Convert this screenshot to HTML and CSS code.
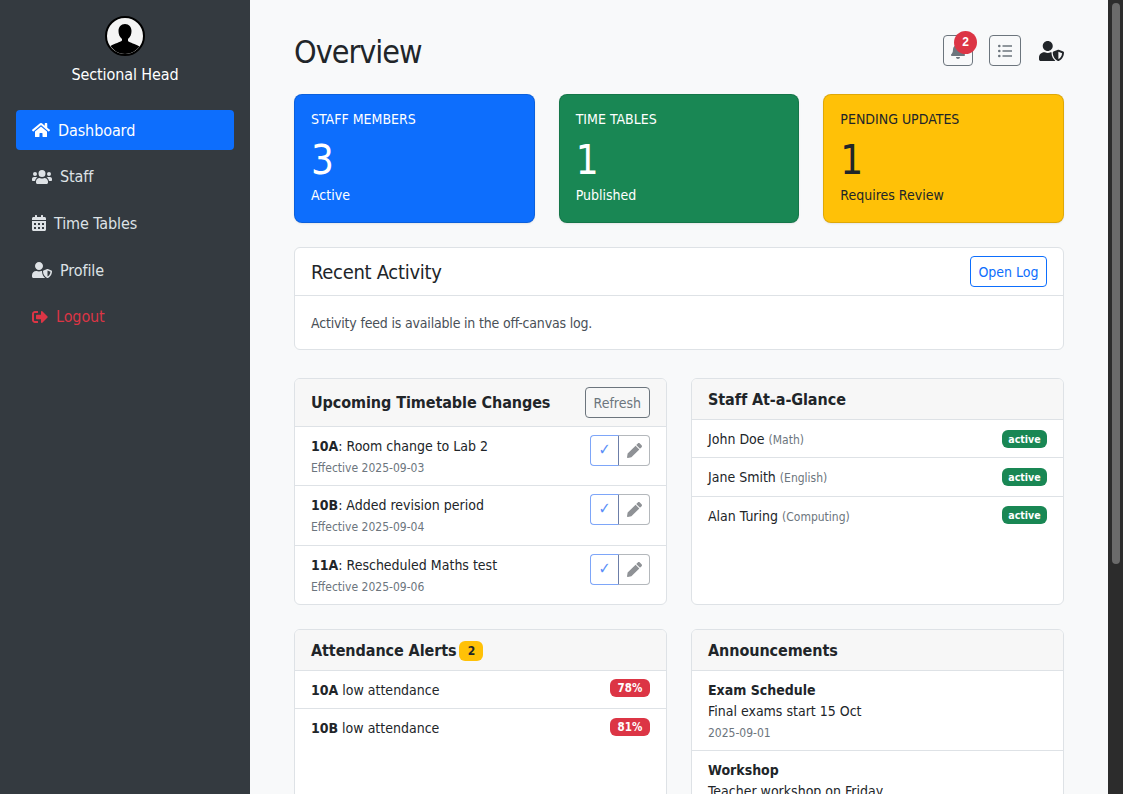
FILE: index.html
```html
<!DOCTYPE html>
<html lang="en">
<head>
    <meta charset="UTF-8">
    <meta name="viewport" content="width=device-width, initial-scale=1.0">
    <title>Sectional Head Dashboard</title>
    <link rel="stylesheet" href="styles.css">
</head>
<body>

<aside class="sidebar">
    <div class="profile">
        <svg class="avatar" viewBox="0 0 40 40">
            <circle cx="20" cy="20" r="19" fill="#f4f4f4" stroke="#000" stroke-width="2"/>
            <path d="M20 8c-4 0-6.500 3-6.500 7 0 3 1 6 3.500 8v1.500c-2 2-7 2.500-11.500 5.500C9 35 14 38 20 38s11-3 14.500-7.500c-4.500-3-9.500-3.500-11.500-5.500V23c2.500-2 3.500-5 3.500-8 0-4-2.500-7-6.500-7z" fill="#000"/>
        </svg>
        <div class="role">Sectional Head</div>
    </div>
    <nav class="nav">
        <a class="nav-link active" href="#">
            <svg class="nav-icon" viewBox="0 0 576 512"><path fill="currentColor" d="M280.400 148.300 96 300.100V464a16 16 0 0 0 16 16l112.100-.3a16 16 0 0 0 15.900-16V368a16 16 0 0 1 16-16h64a16 16 0 0 1 16 16v95.600a16 16 0 0 0 16 16.100L464 480a16 16 0 0 0 16-16V300L295.700 148.300a12.200 12.200 0 0 0-15.300 0zM571.600 251.500 488 182.600V44a12 12 0 0 0-12-12h-56a12 12 0 0 0-12 12v72.600L318.500 43a48 48 0 0 0-61 0L4.300 251.500a12 12 0 0 0-1.600 16.900l25.500 31A12 12 0 0 0 45.200 301l235.200-193.700a12.200 12.200 0 0 1 15.300 0L530.900 301a12 12 0 0 0 16.900-1.600l25.500-31a12 12 0 0 0-1.700-16.900z"/></svg>
            Dashboard
        </a>
        <a class="nav-link" href="#">
            <svg class="nav-icon wide" viewBox="0 0 640 512"><path fill="currentColor" d="M96 224a64 64 0 1 0 0-128 64 64 0 0 0 0 128zm448 0a64 64 0 1 0 0-128 64 64 0 0 0 0 128zm32 32h-64c-18 0-34 7-45 19 40 22 69 62 75 109h66c18 0 32-14 32-32v-32c0-35-29-64-64-64zm-256 0a112 112 0 1 0 0-224 112 112 0 0 0 0 224zm77 32h-8a154 154 0 0 1-138 0h-8c-64 0-115 52-115 115v29c0 26 21 48 48 48h288c27 0 48-22 48-48v-29c0-63-51-115-115-115zm-224-13c-11-12-27-19-45-19H64c-35 0-64 29-64 64v32c0 18 14 32 32 32h66c6-47 35-87 75-109z"/></svg>
            Staff
        </a>
        <a class="nav-link" href="#">
            <svg class="nav-icon cal" viewBox="0 0 448 512"><path fill="currentColor" d="M0 464c0 27 21 48 48 48h352c27 0 48-21 48-48V192H0v272zm320-196c0-7 5-12 12-12h40c7 0 12 5 12 12v40c0 7-5 12-12 12h-40c-7 0-12-5-12-12v-40zm0 128c0-7 5-12 12-12h40c7 0 12 5 12 12v40c0 7-5 12-12 12h-40c-7 0-12-5-12-12v-40zM192 268c0-7 5-12 12-12h40c7 0 12 5 12 12v40c0 7-5 12-12 12h-40c-7 0-12-5-12-12v-40zm0 128c0-7 5-12 12-12h40c7 0 12 5 12 12v40c0 7-5 12-12 12h-40c-7 0-12-5-12-12v-40zM64 268c0-7 5-12 12-12h40c7 0 12 5 12 12v40c0 7-5 12-12 12H76c-7 0-12-5-12-12v-40zm0 128c0-7 5-12 12-12h40c7 0 12 5 12 12v40c0 7-5 12-12 12H76c-7 0-12-5-12-12v-40zM400 64h-48V16c0-9-7-16-16-16h-32c-9 0-16 7-16 16v48H160V16c0-9-7-16-16-16h-32c-9 0-16 7-16 16v48H48C21 64 0 85 0 112v48h448v-48c0-27-21-48-48-48z"/></svg>
            Time Tables
        </a>
        <a class="nav-link" href="#">
            <svg class="nav-icon wide" viewBox="0 0 640 512"><path fill="currentColor" d="M622.300 271.100l-115.200-45c-4.100-1.600-12.600-3.700-22.200 0l-115.200 45c-10.700 4.200-17.700 14-17.700 24.900 0 111.600 68.700 188.800 132.900 213.900 9.600 3.700 18 1.600 22.200 0C558.400 489.900 640 420.500 640 296c0-10.900-7-20.700-17.700-24.900zM496 462.400V273.500l95.500 37.300c-5.600 87.100-60.900 135.400-95.500 151.600zM224 256c70.700 0 128-57.300 128-128S294.700 0 224 0 96 57.300 96 128s57.300 128 128 128zm96 40c0-2.500.8-4.800 1.100-7.200-2.500-.1-4.900-.8-7.500-.8h-16.700c-22.200 10.200-46.900 16-72.900 16s-50.600-5.800-72.900-16h-16.700C60.200 288 0 348.200 0 422.400V464c0 26.500 21.500 48 48 48h352c6.800 0 13.300-1.500 19.200-4-54-42.900-99.200-116.700-99.200-212z"/></svg>
            Profile
        </a>
        <a class="nav-link logout" href="#">
            <svg class="nav-icon out" viewBox="0 0 512 512"><path fill="currentColor" d="M497 273 329 441c-15 15-41 4-41-17v-96H152c-13 0-24-11-24-24v-96c0-13 11-24 24-24h136V88c0-21 25-32 41-17l168 168c9 9 9 25 0 34zM192 436v-40c0-7-5-12-12-12H96c-18 0-32-14-32-32V160c0-18 14-32 32-32h84c7 0 12-5 12-12V76c0-7-5-12-12-12H96c-53 0-96 43-96 96v192c0 53 43 96 96 96h84c7 0 12-5 12-12z"/></svg>
            Logout
        </a>
    </nav>
</aside>

<main class="main">
    <header class="topbar">
        <h1>Overview</h1>
        <div class="top-actions">
            <button class="icon-btn bell-btn">
                <svg class="bell" viewBox="0 0 448 512"><path fill="#6c757d" d="M224 512c35 0 64-29 64-64H160c0 35 29 64 64 64zm215-150c-19-21-55-52-55-154 0-78-54-140-127-155V32a32 32 0 1 0-66 0v21C118 68 64 130 64 208c0 102-36 133-55 154-6 6-9 14-9 22 0 16 13 32 32 32h384c19 0 32-16 32-32 0-8-3-16-9-22z"/></svg>
                <span class="bell-count">2</span>
            </button>
            <button class="icon-btn list-btn">
                <svg class="list" viewBox="0 0 14 14"><circle fill="#6c757d" cx="1.300" cy="2" r="1.300"/><circle fill="#6c757d" cx="1.300" cy="7" r="1.300"/><circle fill="#6c757d" cx="1.300" cy="12" r="1.300"/><path fill="#6c757d" d="M4.500 1.200h9.500v1.500H4.500zm0 5h9.500v1.500H4.500zm0 5h9.500v1.500H4.500z"/></svg>
            </button>
            <svg class="user-shield" viewBox="0 0 640 512"><path fill="#212529" d="M622.300 271.100l-115.200-45c-4.100-1.600-12.600-3.700-22.200 0l-115.200 45c-10.700 4.200-17.700 14-17.700 24.900 0 111.600 68.700 188.800 132.900 213.900 9.600 3.700 18 1.600 22.200 0C558.400 489.900 640 420.500 640 296c0-10.900-7-20.700-17.700-24.900zM496 462.400V273.500l95.500 37.300c-5.600 87.100-60.900 135.400-95.500 151.600zM224 256c70.700 0 128-57.300 128-128S294.700 0 224 0 96 57.300 96 128s57.300 128 128 128zm96 40c0-2.500.8-4.800 1.100-7.200-2.500-.1-4.900-.8-7.500-.8h-16.700c-22.200 10.200-46.900 16-72.900 16s-50.600-5.800-72.900-16h-16.700C60.200 288 0 348.200 0 422.400V464c0 26.500 21.500 48 48 48h352c6.800 0 13.300-1.500 19.200-4-54-42.900-99.200-116.700-99.200-212z"/></svg>
        </div>
    </header>

    <section class="stats">
        <div class="stat stat-blue">
            <div class="stat-title">STAFF MEMBERS</div>
            <div class="stat-num">3</div>
            <div class="stat-sub">Active</div>
        </div>
        <div class="stat stat-green">
            <div class="stat-title">TIME TABLES</div>
            <div class="stat-num">1</div>
            <div class="stat-sub">Published</div>
        </div>
        <div class="stat stat-yellow">
            <div class="stat-title">PENDING UPDATES</div>
            <div class="stat-num">1</div>
            <div class="stat-sub">Requires Review</div>
        </div>
    </section>

    <section class="card activity">
        <div class="activity-head">
            <h2>Recent Activity</h2>
            <button class="btn btn-blue">Open Log</button>
        </div>
        <p class="activity-body">Activity feed is available in the off-canvas log.</p>
    </section>

    <section class="grid">
        <div class="card">
            <div class="card-head tall">
                <h3>Upcoming Timetable Changes</h3>
                <button class="btn btn-grey">Refresh</button>
            </div>
            <div class="row change">
                <div>
                    <div><b>10A</b>: Room change to Lab 2</div>
                    <small>Effective 2025-09-03</small>
                </div>
                <div class="btn-group"><span class="tick">✓</span><span class="pencil"><svg viewBox="0 0 512 512"><path fill="#8f9296" d="M497.900 142.100l-46.100 46.100c-4.700 4.700-12.300 4.700-17 0l-111-111c-4.700-4.700-4.700-12.300 0-17l46.100-46.100c18.700-18.700 49.100-18.700 67.900 0l60.100 60.100c18.800 18.700 18.800 49.100 0 67.900zM284.200 99.800 21.600 362.400.4 483.900c-2.900 16.400 11.400 30.600 27.800 27.800l121.500-21.300 262.600-262.600c4.700-4.700 4.700-12.300 0-17l-111-111c-4.800-4.700-12.400-4.700-17.100 0z"/></svg></span></div>
            </div>
            <div class="row change">
                <div>
                    <div><b>10B</b>: Added revision period</div>
                    <small>Effective 2025-09-04</small>
                </div>
                <div class="btn-group"><span class="tick">✓</span><span class="pencil"><svg viewBox="0 0 512 512"><path fill="#8f9296" d="M497.900 142.100l-46.100 46.100c-4.700 4.700-12.300 4.700-17 0l-111-111c-4.700-4.700-4.700-12.300 0-17l46.100-46.100c18.700-18.700 49.100-18.700 67.900 0l60.100 60.100c18.800 18.700 18.800 49.100 0 67.900zM284.200 99.800 21.600 362.400.4 483.900c-2.900 16.400 11.400 30.600 27.800 27.800l121.500-21.300 262.600-262.600c4.700-4.700 4.700-12.300 0-17l-111-111c-4.800-4.700-12.400-4.700-17.100 0z"/></svg></span></div>
            </div>
            <div class="row change">
                <div>
                    <div><b>11A</b>: Rescheduled Maths test</div>
                    <small>Effective 2025-09-06</small>
                </div>
                <div class="btn-group"><span class="tick">✓</span><span class="pencil"><svg viewBox="0 0 512 512"><path fill="#8f9296" d="M497.900 142.100l-46.100 46.100c-4.700 4.700-12.300 4.700-17 0l-111-111c-4.700-4.700-4.700-12.300 0-17l46.100-46.100c18.700-18.700 49.100-18.700 67.900 0l60.100 60.100c18.800 18.700 18.800 49.100 0 67.900zM284.200 99.800 21.600 362.400.4 483.900c-2.900 16.400 11.400 30.600 27.800 27.800l121.500-21.300 262.600-262.600c4.700-4.700 4.700-12.300 0-17l-111-111c-4.800-4.700-12.400-4.700-17.100 0z"/></svg></span></div>
            </div>
        </div>

        <div class="card">
            <div class="card-head"><h3>Staff At-a-Glance</h3></div>
            <div class="row staff"><span class="label">John Doe <small>(Math)</small></span><span class="badge green">active</span></div>
            <div class="row staff"><span class="label">Jane Smith <small>(English)</small></span><span class="badge green">active</span></div>
            <div class="row staff no-line"><span class="label">Alan Turing <small>(Computing)</small></span><span class="badge green">active</span></div>
        </div>

        <div class="card">
            <div class="card-head"><h3>Attendance Alerts <span class="badge yellow">2</span></h3></div>
            <div class="row staff alert"><span class="label"><b>10A</b> low attendance</span><span class="badge red">78%</span></div>
            <div class="row staff alert no-line"><span class="label"><b>10B</b> low attendance</span><span class="badge red">81%</span></div>
        </div>

        <div class="card">
            <div class="card-head"><h3>Announcements</h3></div>
            <div class="row notice">
                <b>Exam Schedule</b>
                <div>Final exams start 15 Oct</div>
                <small>2025-09-01</small>
            </div>
            <div class="row notice">
                <b>Workshop</b>
                <div>Teacher workshop on Friday</div>
                <small>2025-09-02</small>
            </div>
        </div>
    </section>
</main>

<div class="scrollbar"><div class="thumb"></div></div>

</body>
</html>
```

FILE: styles.css
```css
* {
    box-sizing: border-box;
}
html, body {
    height: 100%;
}
body {
    margin: 0;
    display: flex;
    overflow: hidden;
    font-family: "DejaVu Sans", sans-serif;
    font-stretch: condensed;
    font-size: 14px;
    line-height: 21px;
    color: #212529;
    background-color: #f8f9fa;
}

/* sidebar */
.sidebar {
    flex: 0 0 250px;
    height: 794px;
    padding: 16px;
    background-color: #343a40;
    color: #fff;
}
.profile {
    text-align: center;
}
.avatar {
    display: block;
    width: 40px;
    height: 40px;
    margin: 0 auto 7px;
}
.role {
    font-size: 16px;
    line-height: 24px;
    letter-spacing: -.1px;
}
.nav {
    margin-top: 23px;
    display: flex;
    flex-direction: column;
    gap: 6.700px;
}
.nav-link {
    display: flex;
    align-items: center;
    gap: 8px;
    height: 40px;
    padding: 0 16px;
    border-radius: 4px;
    font-size: 16px;
    letter-spacing: -.1px;
    color: #dee2e6;
    text-decoration: none;
}
.nav-link.active {
    background-color: #0d6efd;
    color: #fff;
}
.nav-link.logout {
    color: #dc3545;
}
.nav-icon {
    width: 18px;
    height: 16px;
}
.nav-icon.wide {
    width: 20px;
}
.nav-icon.cal {
    width: 14px;
}
.nav-icon.out {
    width: 16px;
}

/* main column */
.main {
    flex: 1;
    min-width: 0;
    height: 794px;
    overflow: hidden;
    padding: 24px 44px 0;
}
.topbar {
    display: flex;
    justify-content: space-between;
    align-items: center;
    height: 53px;
    margin-bottom: 17px;
}
h1 {
    margin: 3px 0 0;
    font-size: 32px;
    font-weight: 400;
    line-height: 40px;
    letter-spacing: -1px;
}
.top-actions {
    display: flex;
    align-items: center;
    gap: 16px;
}
.icon-btn {
    position: relative;
    width: 32px;
    height: 31px;
    padding: 0;
    display: flex;
    align-items: center;
    justify-content: center;
    background: none;
    border: 1px solid #6c757d;
    border-radius: 4px;
}
.bell-btn {
    width: 30px;
}
.bell {
    width: 14px;
    height: 16px;
}
.list {
    width: 14px;
    height: 14px;
}
.bell-count {
    position: absolute;
    top: -5px;
    left: 10px;
    width: 23px;
    height: 23px;
    border-radius: 50%;
    background-color: #dc3545;
    color: #fff;
    font-size: 12px;
    font-weight: 700;
    line-height: 23px;
    text-align: center;
}
.user-shield {
    width: 25px;
    height: 20px;
    margin-left: 2px;
}

/* stat cards */
.stats {
    display: grid;
    grid-template-columns: repeat(3, 1fr);
    gap: 24px;
    margin-bottom: 24px;
}
.stat {
    height: 129px;
    padding: 16px;
    border-radius: 8px;
    border: 1px solid rgba(0, 0, 0, .125);
    box-shadow: 0 1px 2px rgba(0, 0, 0, .075);
    color: #fff;
}
.stat-blue {
    background-color: #0d6efd;
}
.stat-green {
    background-color: #198754;
}
.stat-yellow {
    background-color: #ffc107;
    color: #212529;
}
.stat-title {
    font-size: 14px;
    line-height: 17px;
}
.stat-num {
    font-size: 40px;
    line-height: 48px;
    margin-top: 8px;
}
.stat-sub {
    margin-top: 1px;
}

/* cards */
.card {
    background-color: #fff;
    border: 1px solid #dee2e6;
    border-radius: 6px;
    overflow: hidden;
}
.activity {
    margin-bottom: 28px;
}
.activity-head {
    display: flex;
    justify-content: space-between;
    align-items: center;
    height: 48px;
    padding: 0 16px;
    border-bottom: 1px solid #dee2e6;
}
h2 {
    margin: 0;
    font-size: 20px;
    font-weight: 400;
    line-height: 26px;
    letter-spacing: -.3px;
}
.activity-body {
    margin: 0;
    padding: 17px 16px 0;
    color: #495057;
    height: 53px;
    letter-spacing: -.18px;
}
.btn {
    padding: 0 8px;
    height: 31px;
    background: #fff;
    border-radius: 4px;
    font: inherit;
    font-stretch: condensed;
    line-height: 30px;
    white-space: nowrap;
}
.btn-blue {
    width: 77px;
    padding: 0;
    border: 1px solid #0d6efd;
    color: #0d6efd;
}
.btn-grey {
    border: 1px solid #6c757d;
    color: #6c757d;
    background: none;
}
.grid {
    display: grid;
    grid-template-columns: 1fr 1fr;
    gap: 24px;
}
.card-head {
    display: flex;
    justify-content: space-between;
    align-items: center;
    height: 41px;
    padding: 0 16px;
    background-color: #f7f7f7;
    border-bottom: 1px solid #dee2e6;
}
.card-head.tall {
    height: 47.500px;
}
h3 {
    margin: 0;
    font-size: 16px;
    font-weight: 700;
    letter-spacing: -.08px;
}
.row {
    padding: 8px 16px;
    border-bottom: 1px solid #dee2e6;
}
.row:last-child,
.row.no-line {
    border-bottom: none;
}
small {
    font-size: 12px;
    color: #6c757d;
}
.change {
    display: flex;
    justify-content: space-between;
    align-items: flex-start;
    height: 59.500px;
    padding-top: 9px;
}
.change:last-child {
    height: 58.500px;
}
.btn-group {
    display: flex;
    width: 60px;
    height: 31px;
    margin-top: -.6px;
}
.tick {
    flex: 0 0 29px;
    text-align: center;
    font-size: 16px;
    color: #5b8ff9;
    border: 1px solid #7ea6f8;
    border-right-color: #6c7ea8;
    border-radius: 4px 0 0 4px;
    line-height: 27px;
}
.pencil {
    flex: 1;
    display: flex;
    align-items: center;
    justify-content: center;
    border: 1px solid #b4b8bc;
    border-left: none;
    border-radius: 0 4px 4px 0;
}
.pencil svg {
    width: 15px;
    height: 15px;
}
.staff {
    display: flex;
    justify-content: space-between;
    align-items: center;
    height: 38.300px;
}
.staff.no-line {
    height: 37.500px;
}
.staff.no-line .label {
    padding-top: 3px;
}
.staff.alert {
    height: 38px;
}
.staff.alert.no-line .label {
    padding-top: 1px;
}
.staff.alert.no-line .badge {
    margin-bottom: 2px;
}
.label {
    padding-top: 2px;
}
.badge {
    display: inline-block;
    width: 45px;
    height: 18px;
    border-radius: 6px;
    font-size: 10.500px;
    font-weight: 700;
    line-height: 18px;
    text-align: center;
    color: #fff;
}
.badge.green {
    background-color: #198754;
}
.badge.red {
    width: 40px;
    margin-bottom: 4px;
    font-size: 11.500px;
    background-color: #dc3545;
}
.badge.yellow {
    width: 24px;
    height: 20px;
    margin-left: -2px;
    background-color: #ffc107;
    color: #212529;
    font-size: 12px;
    line-height: 20px;
    vertical-align: 1px;
}
.notice {
    height: 80px;
    padding-top: 9px;
}

/* fake dark scrollbar, the window scrollbar in the shot */
.scrollbar {
    flex: 0 0 15px;
    height: 794px;
    padding: 3px 3px 0 4px;
    background-color: #2c2c2c;
}
.thumb {
    height: 561px;
    border-radius: 4px;
    background-color: #6b6b6b;
}
```
